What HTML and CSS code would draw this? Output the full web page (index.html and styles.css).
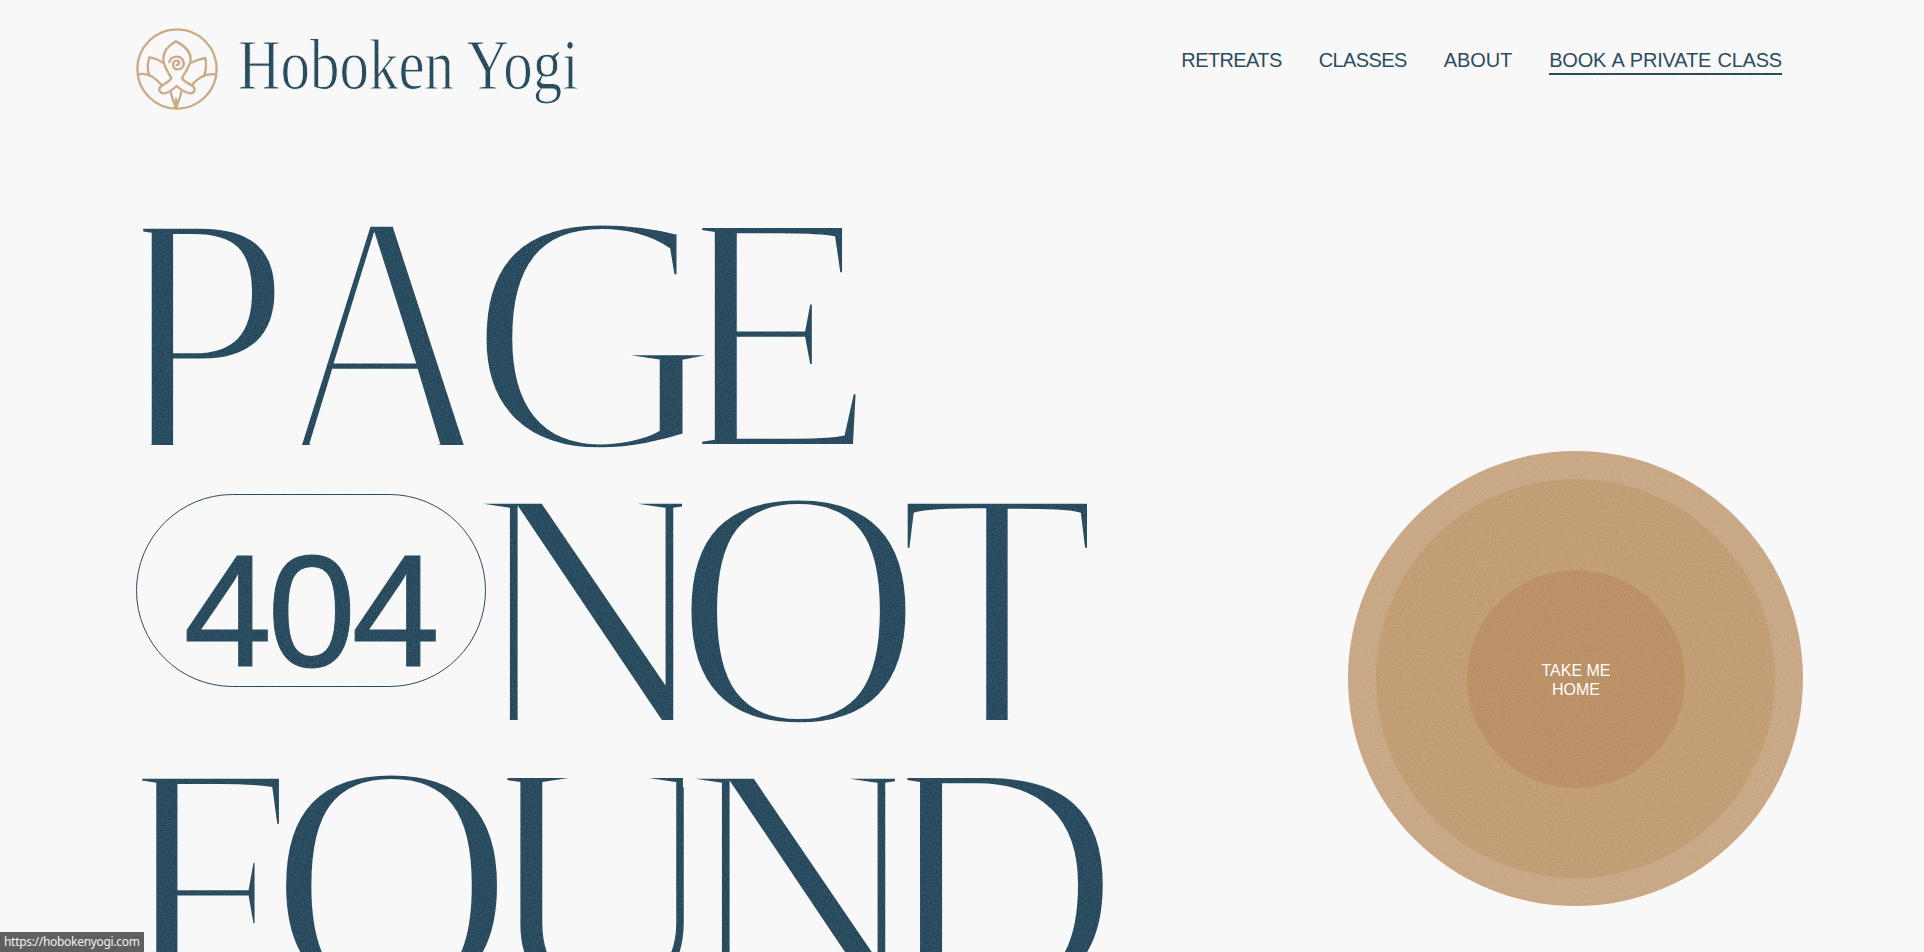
FILE: index.html
```html
<!DOCTYPE html>
<html lang="en">
<head>
  <meta charset="UTF-8">
  <title>Page not found - Hoboken Yogi</title>
  <link rel="stylesheet" href="styles.css">
</head>
<body>
  <header class="site-header">
    <a class="logo" href="#">
      <svg class="logo-icon" viewBox="18 22 246 246" fill="none" stroke="#c9a67f" stroke-width="7" stroke-linecap="round" stroke-linejoin="round">
        <circle cx="141" cy="145" r="119"/>
        <path d="M24 162C45 155 70 165 95 193"/>
        <path d="M258 162C235 156 210 165 185 193"/>
        <path d="M58 110C52 130 52 150 58 163M58 110C72 112 88 118 102 128"/>
        <path d="M226 112C230 130 228 150 222 165M226 112C212 114 195 120 180 128"/>
        <path d="M138 62C120 72 100 90 100 115C100 135 112 150 124 172C118 185 98 190 90 200C84 210 92 220 104 218C118 215 130 205 140 196C150 205 165 216 180 218C192 219 198 208 190 198C180 188 162 185 156 172C168 150 182 135 182 115C182 90 158 72 138 62Z"/>
        <path d="M140 133C148 133 150 122 142 120C132 118 126 128 130 138C136 150 154 148 160 136C165 122 155 108 140 108C130 108 120 114 118 124"/>
        <path d="M122 214C126 232 134 250 138 264C142 250 150 232 154 214M138 235V264"/>
      </svg>
      <span class="logo-text">Hoboken Yogi</span>
    </a>
    <nav class="main-nav">
      <a href="#">RETREATS</a>
      <a href="#">CLASSES</a>
      <a class="nav-about" href="#">ABOUT</a>
      <a class="nav-book" href="#">BOOK A PRIVATE CLASS</a>
    </nav>
  </header>

  <main class="hero">
    <h1 class="headline">
      <div class="line page">
        <span class="ch p">P</span><span class="ch a">A</span><span class="ch g">G</span><span class="ch e">E</span>
      </div>
      <div class="line not">
        <span class="pill">404</span>
        <span class="ch n">N</span><span class="ch o">O</span><span class="ch t">T</span>
      </div>
      <div class="line found">
        <span class="ch f">F</span><span class="ch o">O</span><span class="ch u">U</span><span class="ch n">N</span><span class="ch d">D</span>
      </div>
    </h1>

    <div class="home-circle">
      <div class="home-middle">
        <a class="home-inner" href="#">TAKE ME<br>HOME</a>
      </div>
    </div>
  </main>

  <!-- paper grain over the whole page -->
  <svg class="grain" width="100%" height="100%">
    <filter id="noise">
      <feTurbulence type="fractalNoise" baseFrequency="0.9" numOctaves="2" seed="4"/>
      <feColorMatrix type="matrix" values="0 0 0 0 1  0 0 0 0 1  0 0 0 0 1  0 0 0 -3 2"/>
    </filter>
    <rect width="100%" height="100%" filter="url(#noise)" opacity="0.1"/>
  </svg>

  <div class="status-link">https://hobokenyogi.com</div>
</body>
</html>
```

FILE: styles.css
```css
* {
  box-sizing: border-box;
}

html, body {
  height: 100%;
}

body {
  margin: 0;
  overflow: hidden;
  background-color: #f8f8f8;
  color: #1f4357;
  font-family: "Liberation Sans", Arial, sans-serif;
}

a {
  color: inherit;
  text-decoration: none;
}

.site-header {
  display: flex;
  justify-content: space-between;
  align-items: flex-start;
  height: 196px;
  padding: 28px 142px 0 136px;
}

.logo {
  display: flex;
  align-items: flex-start;
  gap: 20px;
}

.logo-icon {
  width: 82px;
  height: 82px;
}

.logo-text {
  font-family: "Liberation Serif", serif;
  font-size: 71px;
  line-height: 75px;
  white-space: nowrap;
  transform: scaleX(0.83);
  transform-origin: 0 0;
  -webkit-text-stroke: 1px #f8f8f8;
}

.main-nav {
  display: flex;
  gap: 37px;
  margin-top: 20px;
  font-size: 20px;
  line-height: 24px;
  letter-spacing: -0.6px;
}

.nav-about {
  letter-spacing: -0.1px;
}

.nav-book {
  height: 27px;
  border-bottom: 2px solid #1f4357;
  letter-spacing: -0.2px;
  word-spacing: 1px;
}

.hero {
  display: flex;
  justify-content: space-between;
  align-items: flex-start;
  padding: 0 121px 0 136px;
}

/* the display face is not available, so each capital is squeezed on its own,
   a stroke in the page colour thins it down and a clip takes off its serifs */
.headline {
  margin: 0;
  font-family: "Liberation Serif", serif;
  font-size: 345px;
  font-weight: 400;
  line-height: 275px;
}

.line {
  display: flex;
  align-items: flex-start;
  height: 275px;
}

.ch {
  display: block;
  flex: none;
  transform-origin: 0 0;
  -webkit-text-stroke: 10px #f8f8f8;
}

.p { width: 163px; margin-left: -26px; transform: scale(0.95, 1.02); clip-path: inset(-50px -100px 31px 35px); }
.a { width: 194px; transform: scale(0.89, 1.02); clip-path: inset(-50px -100px 31px -100px); }
.g { width: 205px; transform: scaleX(1.02); }
.e { width: 160px; transform: scaleX(0.975); clip-path: inset(-50px -100px -50px 31px); }
.n { width: 206px; transform: scale(1, 1.02); clip-path: inset(-50px -10px 31px -100px); }
.o { width: 225px; transform: scaleX(1.015); }
.t { width: 190px; transform: scale(0.95, 1.02); clip-path: inset(-50px -100px 31px -100px); }
.f { width: 152px; margin-left: -21px; transform: scale(0.94, 1.02); clip-path: inset(-50px -100px 31px 29px); }
.u { width: 198px; transform: scaleX(0.98); clip-path: inset(-50px -21px -50px 28px); }
.d { width: 205px; transform: scaleX(0.98); clip-path: inset(-50px -100px -50px 31px); }

.found .o { width: 213px; transform: scaleX(1); }
.found .n { width: 199px; clip-path: inset(-50px -18px 31px -100px); }

.pill {
  display: flex;
  justify-content: center;
  align-items: center;
  flex: none;
  width: 350px;
  height: 193px;
  margin: 23px -20px 0 0;
  padding: 41px 3px 0 0;
  border: 1px solid #1f4357;
  border-radius: 97px;
  font-family: "Liberation Sans", Arial, sans-serif;
  font-size: 159px;
  line-height: 1;
  letter-spacing: -4.5px;
  -webkit-text-stroke: 1px #1f4357;
}

.home-circle,
.home-middle,
.home-inner {
  display: flex;
  justify-content: center;
  align-items: center;
  border-radius: 50%;
}

.home-circle {
  flex: none;
  width: 455px;
  height: 455px;
  margin-top: 255px;
  background-color: #c7a480;
}

.home-middle {
  width: 399px;
  height: 399px;
  background-color: #bf9a70;
}

.home-inner {
  width: 218px;
  height: 218px;
  padding: 2px 0 0 1px;
  background-color: #b88c5f;
  color: #fff;
  font-size: 16px;
  line-height: 19px;
  text-align: center;
}

.grain {
  position: fixed;
  top: 0;
  left: 0;
  pointer-events: none;
}

.status-link {
  position: fixed;
  left: 0;
  bottom: 0;
  height: 20px;
  padding: 0 4px;
  background-color: #5f5f5f;
  color: #f2f2f2;
  font-family: "Noto Sans", sans-serif;
  font-size: 12px;
  line-height: 20px;
  letter-spacing: -0.3px;
}
```
